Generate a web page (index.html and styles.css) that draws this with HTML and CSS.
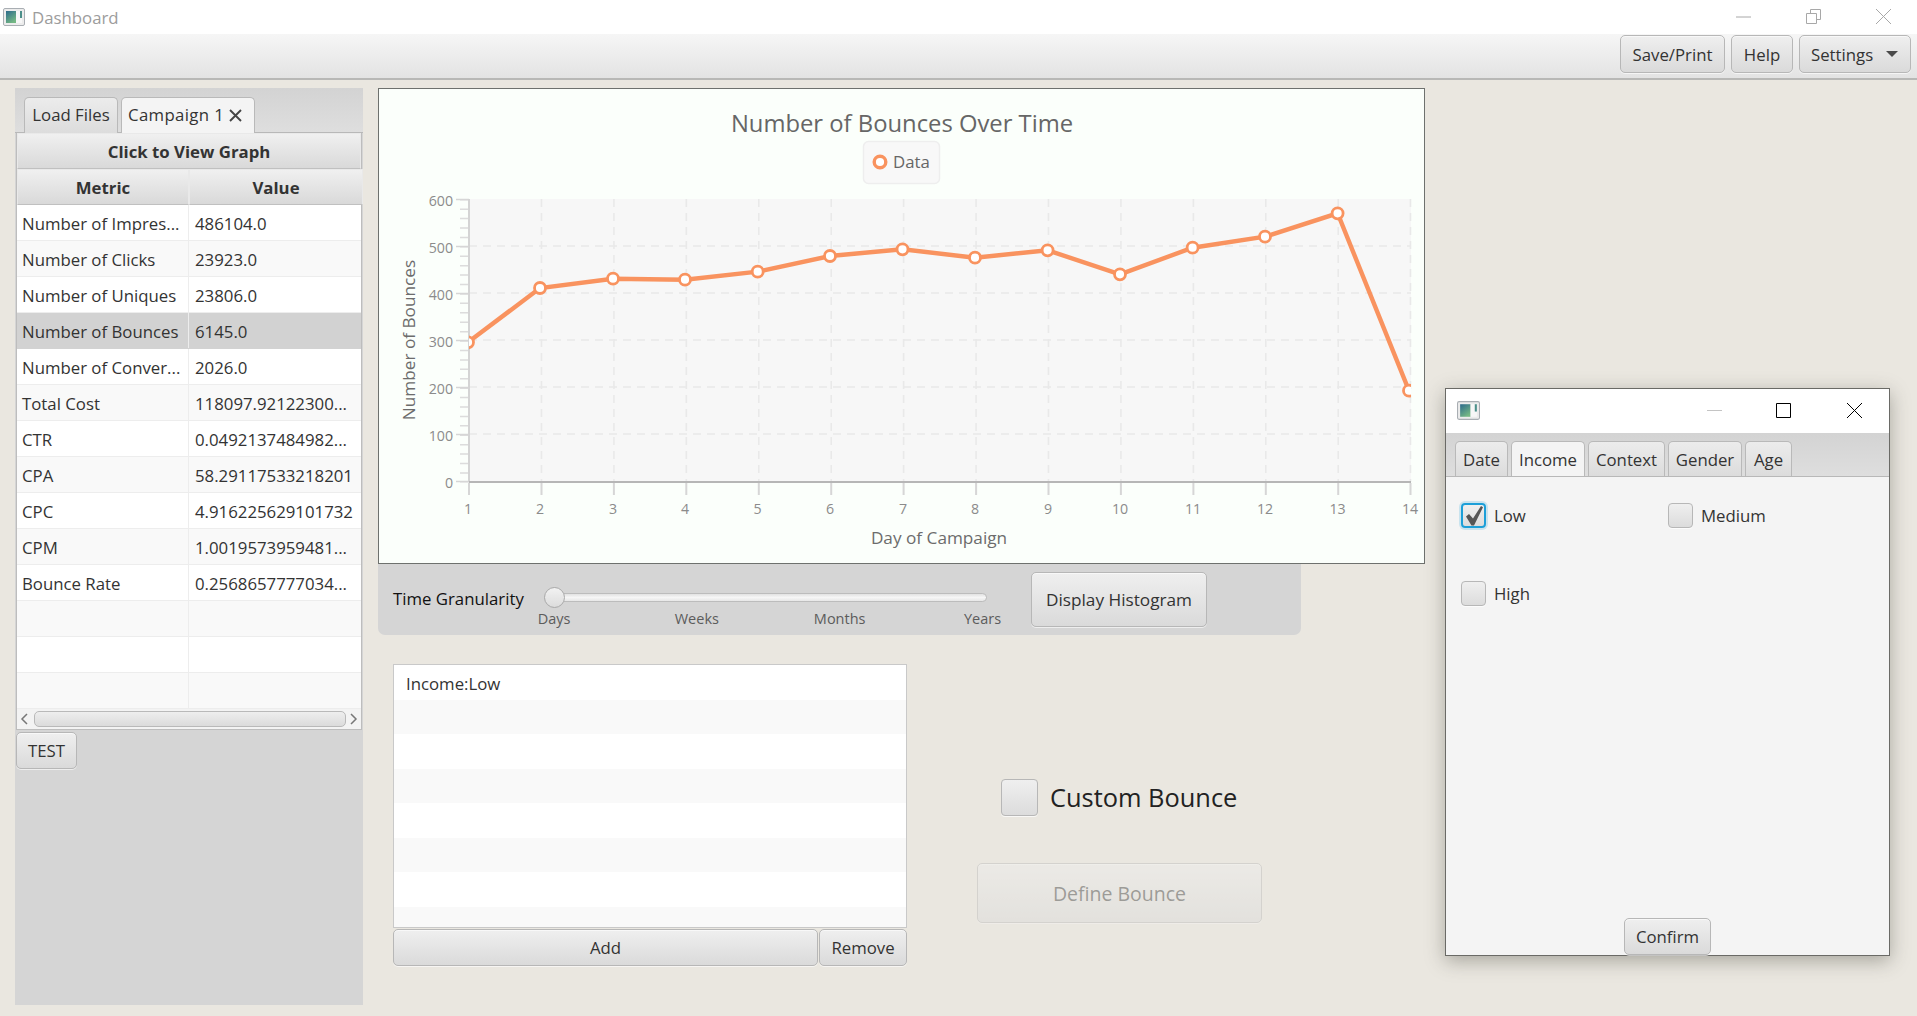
FILE: index.html
```html
<!DOCTYPE html>
<html lang="en">
<head>
<meta charset="utf-8">
<title>Dashboard</title>
<link rel="stylesheet" href="styles.css">
</head>
<body>
<div class="app">
  <header class="titlebar">
    <svg class="app-icon" viewBox="0 0 22 18" width="22" height="18">
      <defs><linearGradient id="ig" x1="0" y1="0" x2="0.6" y2="1"><stop offset="0" stop-color="#2c6a8c"/><stop offset="1" stop-color="#74b884"/></linearGradient></defs>
      <rect x="0.5" y="0.5" width="21" height="17" rx="1.5" fill="#ececec" stroke="#a9aeb3"/>
      <rect x="3" y="3" width="10" height="12" fill="url(#ig)"/>
      <rect x="13" y="3" width="6" height="12" fill="#f7f7f7"/>
      <rect x="17" y="3" width="2" height="7" fill="#4c8f8a"/>
    </svg>
    <span class="title-text">Dashboard</span>
    <div class="win-controls">
      <svg width="15" height="15" viewBox="0 0 15 15"><path d="M0 8h15" stroke="#a8a8a8" fill="none"/></svg>
      <svg width="15" height="15" viewBox="0 0 15 15"><path d="M.5 4.5h10v10H.5zM4.5 4.5V.5h10v10h-4" stroke="#a8a8a8" fill="none"/></svg>
      <svg width="15" height="15" viewBox="0 0 15 15"><path d="M0 0l15 15M15 0L0 15" stroke="#a8a8a8" fill="none"/></svg>
    </div>
  </header>

  <nav class="toolbar">
    <button class="btn btn-save">Save/Print</button>
    <button class="btn btn-help">Help</button>
    <button class="btn btn-settings">Settings<span class="caret"></span></button>
  </nav>

  <main class="main">
    <section class="left-panel">
      <div class="tabbar">
        <div class="tab tab-load"><span class="tab-text">Load Files</span></div>
        <div class="tab tab-campaign selected"><span class="tab-text">Campaign 1</span>
          <svg class="tab-x" width="13" height="13" viewBox="0 0 13 13"><path d="M1 1l11 11M12 1L1 12" stroke="#444" stroke-width="1.9" fill="none"/></svg>
        </div>
      </div>
      <div class="table">
        <div class="table-title">Click to View Graph</div>
        <div class="table-head"><div>Metric</div><div>Value</div></div>
        <div class="row"><div>Number of Impres...</div><div>486104.0</div></div>
        <div class="row odd"><div>Number of Clicks</div><div>23923.0</div></div>
        <div class="row"><div>Number of Uniques</div><div>23806.0</div></div>
        <div class="row active"><div>Number of Bounces</div><div>6145.0</div></div>
        <div class="row"><div>Number of Conver...</div><div>2026.0</div></div>
        <div class="row odd"><div>Total Cost</div><div>118097.92122300...</div></div>
        <div class="row"><div>CTR</div><div>0.0492137484982...</div></div>
        <div class="row odd"><div>CPA</div><div>58.29117533218201</div></div>
        <div class="row"><div>CPC</div><div>4.916225629101732</div></div>
        <div class="row odd"><div>CPM</div><div>1.0019573959481...</div></div>
        <div class="row"><div>Bounce Rate</div><div>0.2568657777034...</div></div>
        <div class="row odd"><div></div><div></div></div>
        <div class="row"><div></div><div></div></div>
        <div class="row odd"><div></div><div></div></div>
        <div class="hscroll">
          <svg width="17" height="20" viewBox="0 0 17 20"><path d="M10 5l-5 5 5 5" stroke="#777" stroke-width="1.5" fill="none"/></svg>
          <div class="hscroll-thumb"></div>
          <svg width="15" height="20" viewBox="0 0 15 20"><path d="M5 5l5 5-5 5" stroke="#777" stroke-width="1.5" fill="none"/></svg>
        </div>
      </div>
      <button class="btn btn-test">TEST</button>
    </section>

    <section class="center">
      <div class="chart">
        <svg class="chart-svg" width="1045" height="474" viewBox="379 89 1045 474">
          <defs><clipPath id="plot"><rect x="469" y="199" width="942" height="283"/></clipPath></defs>
          <text class="c-title" x="902" y="132" text-anchor="middle">Number of Bounces Over Time</text>
          <rect x="863.5" y="141.5" width="76" height="42" rx="5" fill="#f8f8f8" stroke="#eeeeee" stroke-width="1.5"/>
          <circle cx="880" cy="162" r="5.8" fill="#fff" stroke="#f9935f" stroke-width="3.4"/>
          <text class="c-legend" x="893" y="168">Data</text>

          <rect x="469" y="199" width="942" height="283" fill="#f7f7f7"/>
          <path class="grid" d="M469 246h942M469 293h942M469 340h942M469 387h942M469 434h942"/>
          <path class="grid" d="M541.5 199v283M613.9 199v283M686.3 199v283M758.8 199v283M831.2 199v283M903.6 199v283M976.1 199v283M1048.5 199v283M1120.9 199v283M1193.4 199v283M1265.8 199v283M1338.2 199v283M1410.5 199v283"/>

          <line x1="464.5" y1="199" x2="464.5" y2="482.5" stroke="#dcdcdc" stroke-width="9" stroke-dasharray="1.5 7.92"/>
          <path d="M456 199.5h13M456 246.5h13M456 293.5h13M456 340.5h13M456 387.5h13M456 434.5h13M456 481.5h13" stroke="#d6d6d6" stroke-width="1.5" fill="none"/>
          <path d="M469 199v283" stroke="#d4d4d4" stroke-width="2" fill="none"/>
          <path d="M469 482h942" stroke="#b6b6b6" stroke-width="2" fill="none"/>
          <path d="M469 483v12M541.5 483v12M613.9 483v12M686.3 483v12M758.8 483v12M831.2 483v12M903.6 483v12M976.1 483v12M1048.5 483v12M1120.9 483v12M1193.4 483v12M1265.8 483v12M1338.2 483v12M1410.5 483v12" stroke="#d6d6d6" stroke-width="2" fill="none"/>

          <g class="c-tick" text-anchor="end">
            <text x="453" y="206">600</text>
            <text x="453" y="253">500</text>
            <text x="453" y="300">400</text>
            <text x="453" y="347">300</text>
            <text x="453" y="394">200</text>
            <text x="453" y="441">100</text>
            <text x="453" y="488">0</text>
          </g>
          <g class="c-tick" text-anchor="middle">
            <text x="468" y="514">1</text>
            <text x="540" y="514">2</text>
            <text x="613" y="514">3</text>
            <text x="685" y="514">4</text>
            <text x="757.5" y="514">5</text>
            <text x="830" y="514">6</text>
            <text x="903" y="514">7</text>
            <text x="975" y="514">8</text>
            <text x="1048" y="514">9</text>
            <text x="1120" y="514">10</text>
            <text x="1193" y="514">11</text>
            <text x="1265" y="514">12</text>
            <text x="1337.5" y="514">13</text>
            <text x="1410" y="514">14</text>
          </g>
          <text class="c-axis" x="939" y="544" text-anchor="middle">Day of Campaign</text>
          <text class="c-axis" transform="translate(415 340) rotate(-90)" text-anchor="middle">Number of Bounces</text>

          <g clip-path="url(#plot)">
            <polyline fill="none" stroke="#f9935f" stroke-width="4.4" points="468,342.3 540,288 613,278.7 685,279.7 757.7,271.7 830,256 902.5,249.3 975,257.7 1047.6,250.3 1120,274.3 1192.6,247.7 1265,236.7 1337.6,213.3 1409,390.7"/>
            <g fill="#fff" stroke="#f9935f" stroke-width="2.8">
              <circle cx="468" cy="342.3" r="5.5"/><circle cx="540" cy="288" r="5.5"/><circle cx="613" cy="278.7" r="5.5"/>
              <circle cx="685" cy="279.7" r="5.5"/><circle cx="757.7" cy="271.7" r="5.5"/><circle cx="830" cy="256" r="5.5"/>
              <circle cx="902.5" cy="249.3" r="5.5"/><circle cx="975" cy="257.7" r="5.5"/><circle cx="1047.6" cy="250.3" r="5.5"/>
              <circle cx="1120" cy="274.3" r="5.5"/><circle cx="1192.6" cy="247.7" r="5.5"/><circle cx="1265" cy="236.7" r="5.5"/>
              <circle cx="1337.6" cy="213.3" r="5.5"/><circle cx="1409" cy="390.7" r="5.5"/>
            </g>
          </g>
        </svg>
      </div>

      <div class="slider-panel">
        <div class="slider-label">Time Granularity</div>
        <div class="slider">
          <div class="track"><span class="thumb"></span></div>
          <div class="ticks"><span>Days</span><span>Weeks</span><span>Months</span><span>Years</span></div>
        </div>
        <button class="btn btn-hist">Display Histogram</button>
      </div>

      <div class="lower">
        <div class="list-col">
          <div class="list">
            <div class="list-row">Income:Low</div>
            <div class="list-row odd"></div>
            <div class="list-row"></div>
            <div class="list-row odd"></div>
            <div class="list-row"></div>
            <div class="list-row odd"></div>
            <div class="list-row"></div>
            <div class="list-row odd"></div>
          </div>
          <div class="list-actions">
            <button class="btn btn-add">Add</button>
            <button class="btn btn-remove">Remove</button>
          </div>
        </div>
        <div class="bounce-col">
          <label class="custom-check"><span class="box box-large"></span>Custom Bounce</label>
          <button class="btn btn-define" disabled>Define Bounce</button>
        </div>
      </div>
    </section>
  </main>

  <aside class="float-window">
    <div class="float-title">
      <svg class="float-icon" viewBox="0 0 22 18" width="23" height="19">
        <rect x="0.5" y="0.5" width="21" height="17" rx="1.5" fill="#ececec" stroke="#a9aeb3"/>
        <rect x="3" y="3" width="10" height="12" fill="url(#ig)"/>
        <rect x="13" y="3" width="6" height="12" fill="#f7f7f7"/>
        <rect x="17" y="3" width="2" height="7" fill="#4c8f8a"/>
      </svg>
      <div class="float-controls">
        <svg class="float-min" width="15" height="15" viewBox="0 0 15 15"><path d="M0 7.5h15" stroke="#c4c4c4" fill="none"/></svg>
        <svg width="15" height="15" viewBox="0 0 15 15"><path d="M.5.5h14v14H.5z" stroke="#000" fill="none"/></svg>
        <svg width="15" height="15" viewBox="0 0 15 15"><path d="M0 0l15 15M15 0L0 15" stroke="#000" fill="none"/></svg>
      </div>
    </div>
    <div class="tabbar tabbar-float">
      <div class="tab t-date">Date</div>
      <div class="tab t-income selected">Income</div>
      <div class="tab t-context">Context</div>
      <div class="tab t-gender">Gender</div>
      <div class="tab t-age">Age</div>
    </div>
    <div class="float-body">
      <div class="checks">
        <label class="check"><span class="box focused">
          <svg width="23" height="23" viewBox="0 0 23 23"><path d="M4 12.5L7 10l4 4.5L19 2l2 1.2L12 21.5h-2.5z" fill="#555"/></svg>
        </span>Low</label>
        <label class="check"><span class="box"></span>Medium</label>
        <label class="check"><span class="box"></span>High</label>
      </div>
      <button class="btn btn-confirm">Confirm</button>
    </div>
  </aside>
</div>
</body>
</html>
```
FILE: styles.css
```css
* { box-sizing: border-box; }
html, body { margin: 0; padding: 0; }
body {
  font-family: "Open Sans", "Noto Sans", sans-serif;
  font-size: 16.8px;
  color: #333;
  background: #eae7e0;
}
.app {
  position: relative;
  width: 1917px;
  height: 1016px;
  overflow: hidden;
  display: flex;
  flex-direction: column;
  background: #eae7e0;
}

/* Title bar */
.titlebar {
  height: 34px;
  flex: none;
  background: #fff;
  display: flex;
  align-items: center;
  padding-left: 3px;
}
.app-icon { flex: none; margin-top: -1px; }
.title-text { margin-left: 7px; color: #9c9c9c; }
.win-controls {
  margin-left: auto;
  margin-right: 26px;
  display: flex;
  gap: 55px;
  margin-top: -1px;
}

/* Toolbar */
.toolbar {
  height: 46px;
  flex: none;
  display: flex;
  justify-content: flex-end;
  gap: 6px;
  padding: 1px 6px 0 0;
  background: linear-gradient(#f6f6f6, #e3e3e3);
  border-bottom: 2px solid #b8b8b6;
}
.btn {
  font: inherit;
  color: #333;
  padding: 0;
  border: 1.5px solid #b7b7b7;
  border-radius: 5px;
  background: linear-gradient(#efefef, #dadada);
  box-shadow: inset 0 1px 0 #f8f8f8, 0 1px 0 rgba(255, 255, 255, .6);
}
.btn-save { width: 105px; height: 38px; }
.btn-help { width: 62px; height: 38px; }
.btn-settings {
  width: 112px;
  height: 38px;
  display: flex;
  align-items: center;
  padding-left: 11px;
}
.caret {
  margin-left: 13px;
  border-left: 6px solid transparent;
  border-right: 6px solid transparent;
  border-top: 6px solid #4a4a4a;
}

/* Layout */
.main {
  flex: 1;
  display: flex;
  gap: 15px;
  padding: 8px 0 0 15px;
  min-height: 0;
}

/* Left panel */
.left-panel {
  width: 348px;
  height: 917px;
  flex: none;
  background: #d5d5d5;
}
.tabbar {
  height: 45px;
  display: flex;
  gap: 3px;
  padding: 9px 0 0 9px;
  background: linear-gradient(#d3d3d3, #dedede);
  border-bottom: 1px solid #b8b8b8;
}
.tab {
  height: 36px;
  display: flex;
  align-items: center;
  justify-content: center;
  border: 1.5px solid #b9b9b9;
  border-bottom: 0;
  border-radius: 5px 5px 0 0;
  background: linear-gradient(#ececec, #dcdcdc);
  white-space: nowrap;
}
.tab.selected { background: #f4f4f4; }
.tab-text { margin-top: -2px; }
.tab-load { width: 94px; }
.tab-campaign { width: 134px; gap: 5px; justify-content: flex-start; padding-left: 6px; }
.tab-campaign .tab-text { letter-spacing: .35px; }
.tab-x { flex: none; }

.table {
  margin: 0 1px;
  border-left: 1px solid #bdbdbd;
  border-right: 1px solid #bdbdbd;
  background: #fff;
}
.table-title, .table-head > div {
  font-weight: 700;
  display: flex;
  align-items: center;
  justify-content: center;
  background: linear-gradient(#f0f0f0, #d9d9d9);
  border: 1px solid #e9e9e9;
  border-bottom-color: #c0c0c0;
}
.table-title { height: 36px; }
.table-head { display: grid; grid-template-columns: 172px 174px; }
.table-head > div { height: 36px; padding-top: 1px; }
.row {
  display: grid;
  grid-template-columns: 172px 174px;
  height: 36px;
  background: #fff;
  border-bottom: 1px solid #ededed;
}
.row.odd { background: #f9f9f9; }
.row.active { background: #d2d2d2; border-bottom-color: #d2d2d2; }
.row > div {
  display: flex;
  align-items: center;
  padding: 1px 0 0 5px;
  white-space: nowrap;
  overflow: hidden;
}
.row > div:first-child { border-right: 1px solid #ededed; }
.row > div:last-child { padding-left: 6px; }
.hscroll {
  height: 21px;
  display: flex;
  align-items: center;
  background: #f3f3f3;
  border-bottom: 1px solid #bdbdbd;
}
.hscroll svg { flex: none; }
.hscroll-thumb {
  flex: 1;
  height: 16px;
  border: 1.5px solid #b9b9b9;
  border-radius: 5px;
  background: linear-gradient(#eeeeee, #dbdbdb);
}
.btn-test {
  display: block;
  width: 61px;
  height: 37px;
  margin: 2px 0 0 1px;
}

/* Centre column */
.center { width: 1047px; flex: none; }
.chart {
  height: 476px;
  border: 1.5px solid #6e716e;
  background: #fbfffb;
  overflow: hidden;
}
.chart-svg { display: block; margin: -.5px; }
.chart-svg text { font-family: "Open Sans", "Noto Sans", sans-serif; }
.c-title { font-size: 23.8px; fill: #666; }
.c-legend { font-size: 16.8px; fill: #666; }
.c-tick { font-size: 14.2px; fill: #8b8b8b; }
.c-axis { font-size: 17.2px; fill: #6c6c6c; }
.grid { stroke: #e9e9e9; stroke-width: 1.6; stroke-dasharray: 8 6; fill: none; }

.slider-panel {
  width: 923px;
  height: 71px;
  display: flex;
  align-items: center;
  padding-left: 15px;
  background: #d5d5d5;
  border-radius: 0 0 7px 7px;
}
.slider-label { width: 161px; flex: none; color: #111; margin-top: -2px; }
.slider {
  width: 428.5px;
  flex: none;
  align-self: flex-start;
  margin-right: 48.5px;
  padding-top: 29px;
}
.track {
  position: relative;
  height: 9px;
  margin: 0 -4px 0 -9px;
  border: 1px solid #bcbcbc;
  border-radius: 5px;
  background: linear-gradient(#e2e2e2, #f6f6f6 50%, #e6e6e6);
}
.thumb {
  position: absolute;
  left: -2px;
  top: -7px;
  width: 21px;
  height: 21px;
  border-radius: 50%;
  border: 1.5px solid #a9a9a9;
  background: linear-gradient(#f2f2f2, #dcdcdc);
}
.ticks {
  display: flex;
  justify-content: space-between;
  margin-top: 7px;
  height: 20px;
  font-size: 14.5px;
  color: #5c5c5c;
}
.ticks span { width: 0; display: flex; justify-content: center; line-height: 20px; }
.btn-hist { width: 176px; height: 55px; flex: none; font-size: 17.2px; }

.lower {
  display: flex;
  padding: 29px 0 0 15px;
}
.list-col { width: 514px; flex: none; }
.list {
  height: 264px;
  border: 1px solid #c9c9c9;
  background: #fff;
  overflow: hidden;
}
.list-row {
  height: 34.5px;
  padding: 7.5px 0 0 12px;
  line-height: 22px;
  background: #fff;
}
.list-row.odd { background: #f9f9f9; }
.list-actions { display: flex; margin-top: 1px; gap: 1px; }
.btn-add { width: 425px; height: 37px; }
.btn-remove { width: 88px; height: 37px; }

.bounce-col {
  margin-left: 70px;
  width: 285px;
  flex: none;
  display: flex;
  flex-direction: column;
  padding: 115px 0 0 0;
}
.custom-check {
  display: flex;
  align-items: center;
  gap: 12px;
  margin-left: 24px;
  font-size: 25.4px;
  line-height: 35px;
  height: 37px;
  color: #222;
}
.box {
  width: 25px;
  height: 25px;
  flex: none;
  display: block;
  border: 1.5px solid #b7b7b7;
  border-radius: 4px;
  background: linear-gradient(#efefef, #dcdcdc);
  box-shadow: 0 1px 0 rgba(255, 255, 255, .7);
}
.box-large { width: 37px; height: 37px; }
.btn-define {
  width: 285px;
  height: 60px;
  margin-top: 47px;
  font-size: 19.5px;
  opacity: .42;
}

/* Floating window */
.float-window {
  position: absolute;
  left: 1445px;
  top: 388px;
  width: 445px;
  height: 568px;
  display: flex;
  flex-direction: column;
  background: #f4f4f4;
  border: 1.5px solid #6a6a66;
  box-shadow: 0 5px 18px rgba(60, 60, 50, .38);
}
.float-title {
  height: 44px;
  flex: none;
  display: flex;
  align-items: center;
  padding: 0 0 2px 11px;
  background: #fff;
}
.float-controls {
  margin-left: auto;
  margin-right: 27px;
  display: flex;
  gap: 56px;
}
.float-min { margin-right: -2px; }
.tabbar-float { height: 44px; flex: none; padding: 8px 0 0 9px; }
.tabbar-float .tab { height: 35px; }
.t-date { width: 53px; }
.t-income { width: 74px; }
.t-context { width: 77px; }
.t-gender { width: 74px; }
.t-age { width: 47px; }
.float-body {
  flex: 1;
  display: flex;
  flex-direction: column;
  align-items: center;
  padding-bottom: 0;
}
.checks {
  flex: 1;
  width: 100%;
  display: grid;
  grid-template-columns: 207px 1fr;
  grid-auto-rows: 25px;
  row-gap: 53px;
  padding: 26px 0 0 15px;
}
.check { display: flex; align-items: center; gap: 8px; }
.box.focused {
  border: 2px solid #1c9fd8;
  box-shadow: 0 0 0 2px rgba(28, 159, 216, .2);
}
.box svg { display: block; margin: -1px; }
.btn-confirm { width: 87px; height: 37px; flex: none; }
```
